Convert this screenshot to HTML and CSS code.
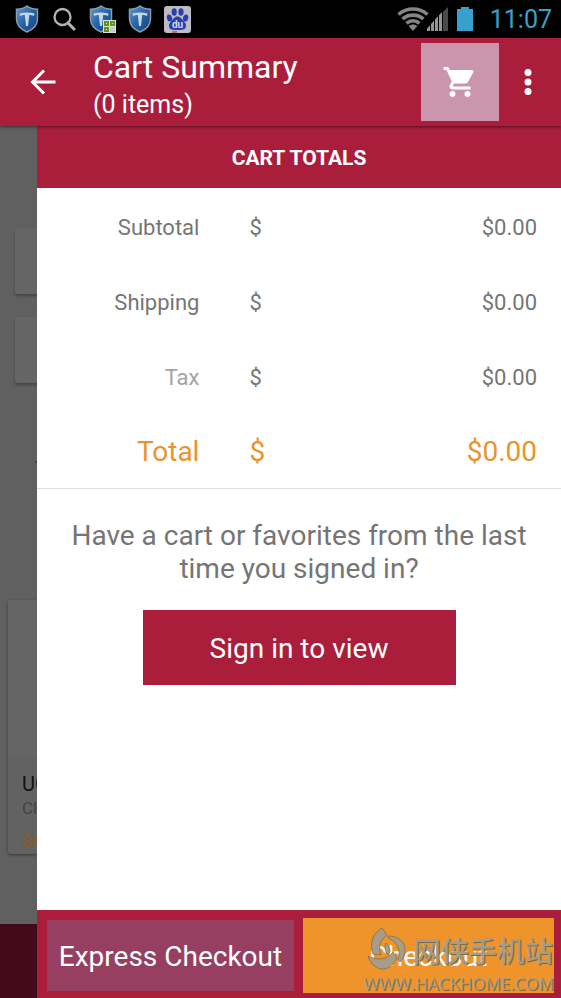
FILE: index.html
```html
<!DOCTYPE html>
<html lang="en">
<head>
<meta charset="utf-8">
<meta name="viewport" content="width=device-width, initial-scale=1">
<title>Cart Summary</title>
<link rel="stylesheet" href="styles.css">
</head>
<body>
<svg class="defs" aria-hidden="true">
  <defs>
    <linearGradient id="shield-fill" x1="0" y1="0" x2="1" y2="1">
      <stop offset="0" stop-color="#5f9bd0"/>
      <stop offset=".5" stop-color="#2464a6"/>
      <stop offset="1" stop-color="#133f7a"/>
    </linearGradient>
    <symbol id="shield" viewBox="0 0 24 28">
      <path d="M12 1C9 3.400 5 4.200 1.500 4.200V14c0 6 4.500 10.500 10.500 13 6-2.500 10.500-7 10.500-13V4.200C19 4.200 15 3.400 12 1z" fill="url(#shield-fill)" stroke="#8d9aa8" stroke-width="1.500"/>
      <path d="M4.500 8.500c5-1.500 10-1.500 15 0l-.5 2.600c-1.600-.8-3-1-4.800-1L13 21h-2l-1.200-10.900c-1.800 0-3.200.2-4.800 1z" fill="#c9d6e2"/>
    </symbol>
  </defs>
</svg>

<header class="status">
  <div class="status-left">
    <svg class="ic-shield"><use href="#shield"/></svg>
    <svg class="ic-search" viewBox="0 0 24 24" fill="none" stroke="#b5b0b2"><circle cx="10.500" cy="10" r="8" stroke-width="2.300"/><path d="M16 16l6 6" stroke-width="3" stroke-linecap="round"/></svg>
    <span class="badged">
      <svg class="ic-shield"><use href="#shield"/></svg>
      <svg class="badge" viewBox="0 0 13 13"><path fill="#dce3cf" d="M0 0h13v13H0z"/><path fill="#5f941f" d="M1 1h5v5H1zM7 1h5v5H7zM1 7h5v5H1z"/><path fill="#c4ceca" d="M7 7h5v5H7z"/><path fill="#dce3cf" d="M3 3h1v1H3zM9 3h1v1H9zM3 9h1v1H3z"/></svg>
    </span>
    <svg class="ic-shield"><use href="#shield"/></svg>
    <svg class="ic-paw" viewBox="0 0 27 27"><rect width="27" height="27" rx="3" fill="#bdbbc4"/><g fill="#2a3faa"><ellipse cx="5.500" cy="12" rx="2.600" ry="3.600" transform="rotate(-15 5.500 12)"/><ellipse cx="10.200" cy="6" rx="2.600" ry="3.700"/><ellipse cx="17" cy="6" rx="2.600" ry="3.700"/><ellipse cx="21.600" cy="12" rx="2.600" ry="3.600" transform="rotate(15 21.600 12)"/><path d="M13.500 10.500c3 0 4.200 2.800 6 4.500 2.200 2 3 3.800 2.300 6-.8 2.800-3.300 3-8.300 3s-7.500-.2-8.300-3c-.7-2.200.1-4 2.300-6 1.800-1.700 3-4.500 6-4.500z"/></g><text x="13.500" y="21.500" text-anchor="middle" class="paw-text">du</text><path d="M8 26h5" stroke="#b8503c" stroke-width="1.500"/></svg>
  </div>
  <div class="status-right">
    <svg class="ic-wifi" viewBox="0 0 32 24" fill="none" stroke="#858585" stroke-width="3.600"><path d="M1.500 7.500C10 .2 22 .2 30.500 7.500"/><path d="M5.500 12c6-5.200 15-5.200 21 0"/><path d="M9.500 16.300c4-3.400 9-3.400 13 0"/><path d="M16 24l-4.300-5c2.600-2 6-2 8.600 0z" fill="#858585" stroke="none"/></svg>
    <svg class="ic-signal" viewBox="0 0 22 24"><g fill="#969696"><path d="M0 24v-2.500l3-3.300V24zM4 24v-7l3-3.300V24zM8 24V12.600l3-3.300V24zM12 24V8.200l3-3.300V24z"/><path fill="#4a4a4a" d="M16 24V4.800L21 0v24z"/></g></svg>
    <svg class="ic-battery" viewBox="0 0 16 24"><path fill="#38a0cd" d="M4 0h8v2h4v22H0V2h4z"/></svg>
    <time class="clock">11:07</time>
  </div>
</header>

<header class="appbar">
  <button class="back" type="button" aria-label="Back"><svg viewBox="0 0 26 26" fill="none" stroke="#fff" stroke-width="3"><path d="M25.500 13H3M14 1.500L2.500 13 14 24.500"/></svg></button>
  <div class="titles">
    <h1>Cart Summary</h1>
    <p>(0 items)</p>
  </div>
  <button class="cart" type="button" aria-label="Cart"><svg viewBox="0 0 24 24" fill="#fff"><path d="M7 18c-1.100 0-1.990.9-1.990 2S5.900 22 7 22s2-.9 2-2-.9-2-2-2zM1 2v2h2l3.600 7.590-1.350 2.450c-.16.280-.25.610-.25.960 0 1.100.9 2 2 2h12v-2H7.420c-.14 0-.25-.11-.25-.25l.03-.12.900-1.630h7.450c.75 0 1.410-.41 1.750-1.030l3.580-6.490A1 1 0 0 0 20 4H5.210l-.94-2H1zm16 16c-1.100 0-1.990.9-1.990 2s.89 2 1.990 2 2-.9 2-2-.9-2-2-2z"/></svg></button>
  <button class="more" type="button" aria-label="More options"><svg viewBox="0 0 8 28" fill="#fff"><circle cx="4" cy="4.500" r="3.500"/><circle cx="4" cy="14" r="3.500"/><circle cx="4" cy="23.500" r="3.500"/></svg></button>
</header>

<div class="stage">
  <div class="page" aria-hidden="true">
    <div class="page-body">
      <div class="tile"></div>
      <div class="tile"></div>
      <div class="dash"></div>
      <article class="product">
        <div class="photo"></div>
        <div class="info">
          <p class="name">UG</p>
          <p class="kind">Cl</p>
          <p class="price">$6</p>
        </div>
      </article>
    </div>
    <div class="page-foot"></div>
  </div>

  <main class="drawer">
    <h2>CART TOTALS</h2>
    <table class="totals">
      <tbody>
        <tr><th scope="row">Subtotal</th><td>$</td><td class="amount">$0.00</td></tr>
        <tr><th scope="row">Shipping</th><td>$</td><td class="amount">$0.00</td></tr>
        <tr><th scope="row" class="muted">Tax</th><td>$</td><td class="amount">$0.00</td></tr>
        <tr class="total"><th scope="row">Total</th><td>$</td><td class="amount">$0.00</td></tr>
      </tbody>
    </table>
    <section class="signin">
      <p>Have a cart or favorites from the last time you signed in?</p>
      <button type="button">Sign in to view</button>
    </section>
    <footer class="actions">
      <button class="express" type="button">Express Checkout</button>
      <button class="checkout" type="button">Checkout</button>
      <div class="mark">
        <svg viewBox="0 0 38 46"><g fill="#a79c86" stroke="#80693f" stroke-width=".7"><path d="M14 1L19 8C12 13 10 20 13 28L5 27C1 16 5 6 14 1z"/><path d="M0 29C8 33 18 34 25 25L29 31C24 39 19 43 13 42 7 41 2 36 0 29z"/><path d="M20 9C31 9 37 15 37 23c0 5-2 9-5 12l-2-3c3-8 0-17-10-21z"/><path d="M18 16C21 18 22 21 22 25L20 28C17 24 16 20 18 16z"/></g></svg>
        <span class="mark-name" lang="zh">网侠手机站</span>
        <span class="mark-url">WWW.HACKHOME.COM</span>
      </div>
    </footer>
  </main>
</div>
</body>
</html>
```
FILE: styles.css
```css
* { box-sizing: border-box; }

body {
  margin: 0;
  min-height: 100vh;
  display: flex;
  flex-direction: column;
  font-family: Roboto, "Liberation Sans", sans-serif;
  color: #757575;
  background: #fff;
}

h1, h2, p { margin: 0; font-weight: 400; }
button { border: 0; padding: 0; font: inherit; color: #fff; background: none; cursor: pointer; }
svg { display: block; }
.defs { position: absolute; width: 0; height: 0; }

/* Status bar */
.status {
  height: 38px;
  display: flex;
  justify-content: space-between;
  align-items: center;
  padding: 0 9px 0 15px;
  background: #000;
}
.status-left { display: flex; align-items: center; gap: 13px; }
.status-right { display: flex; align-items: center; }
.ic-shield { width: 24px; height: 28px; }
.ic-search { width: 24px; height: 24px; }
.badged { position: relative; margin-right: 2px; }
.badge { position: absolute; right: -3px; bottom: 0; width: 13px; height: 13px; }
.ic-paw { width: 27px; height: 27px; margin-left: -1px; }
.paw-text { font: 700 10px Roboto, sans-serif; fill: #d5d8ee; }
.ic-wifi { width: 32px; height: 24px; }
.ic-signal { width: 22px; height: 24px; margin: 0 8px 0 -2px; }
.ic-battery { width: 16px; height: 24px; }
.clock { margin-left: 17px; font-size: 25px; line-height: 38px; padding-top: 1px; color: #38a0cd; }

/* App bar */
.appbar {
  position: relative;
  z-index: 1;
  height: 88px;
  display: flex;
  align-items: center;
  padding-right: 29px;
  background: #aa1e3c;
  color: #fff;
  box-shadow: 0 1px 3px rgba(0, 0, 0, .5);
}
.back { width: 93px; height: 88px; padding-left: 30px; }
.back svg { width: 26px; height: 26px; }
.titles { flex: 1; padding-top: 9px; }
.titles h1 { font-size: 32px; line-height: 37px; }
.titles p { font-size: 25px; line-height: 38px; }
.cart { width: 78px; height: 78px; background: #cb95ad; display: grid; place-items: center; }
.cart svg { width: 36px; height: 36px; }
.more { width: 33px; height: 78px; display: flex; align-items: center; justify-content: flex-end; }
.more svg { width: 8px; height: 28px; }

/* The drawer slides over the dimmed page */
.stage { flex: 1; display: grid; grid-template-columns: 37px 1fr; }
.page { display: flex; flex-direction: column; overflow: hidden; background: #606060; }
.page-body { flex: 1; padding: 102px 0 0 8px; }
.tile {
  width: 200px;
  height: 66px;
  margin: 0 0 23px 7px;
  border-radius: 2px;
  background: #656565;
  box-shadow: 0 2px 3px rgba(0, 0, 0, .3);
}
.dash { width: 4px; height: 2px; margin: 78px 0 137px 27px; background: #444; }
.product { width: 200px; border-radius: 3px; background: #626262; box-shadow: 0 1px 3px rgba(0, 0, 0, .4); }
.photo { height: 155px; background: #656565; }
.info { padding: 16px 0 0 14px; height: 99px; }
.name { font-size: 20px; line-height: 26px; color: #101010; }
.kind { font-size: 17px; line-height: 22px; color: #434343; }
.price { font-size: 17px; line-height: 22px; margin-top: 12px; color: #8e5a1c; }
.page-foot { height: 74px; background: #430a19; }

.drawer { display: flex; flex-direction: column; background: #fff; }
.drawer h2 {
  font-size: 21px;
  font-weight: 700;
  line-height: 62px;
  padding-top: 1px;
  height: 62px;
  text-align: center;
  color: #fff;
  background: #aa1e3c;
}

.totals { width: 100%; border-collapse: collapse; border-bottom: 1px solid #dedede; font-size: 22px; }
.totals tr { height: 75px; }
.totals th { width: 31%; padding: 3px 0 0; text-align: right; font-weight: 400; }
.totals td { padding: 3px 0 0 50px; }
.totals .amount { padding: 3px 24px 0 0; text-align: right; }
.totals .muted { color: #a3a3a3; }
.totals .total { color: #e8942c; font-size: 28px; }

.signin { flex: 1; padding: 30px 24px; font-size: 28px; line-height: 33px; text-align: center; }
.signin button { width: 313px; max-width: 100%; height: 75px; padding-top: 3px; margin-top: 25px; background: #aa1e3c; }

.actions {
  position: relative;
  height: 88px;
  display: grid;
  grid-template-columns: 247fr 251fr;
  gap: 9px;
  align-items: center;
  padding: 3px 7px 0 10px;
  font-size: 28px;
  background: #aa1e3c;
}
.actions button { padding-top: 2px; }
.express { height: 71px; background: #963f61; }
.checkout { height: 75px; background: #ee942b; }

.mark {
  position: absolute;
  right: 7px;
  bottom: 3px;
  display: grid;
  grid-template-columns: 42px auto;
  column-gap: 7px;
  color: #a79c86;
  text-shadow: 1px 1px 0 #80693f;
  pointer-events: none;
}
.mark svg { width: 38px; height: 46px; justify-self: end; }
.mark-name { font: 500 28px/46px "Noto Sans CJK SC", sans-serif; }
.mark-url { grid-column: 1 / -1; font: 17px/22px "Open Sans", sans-serif; text-align: right; }
```
